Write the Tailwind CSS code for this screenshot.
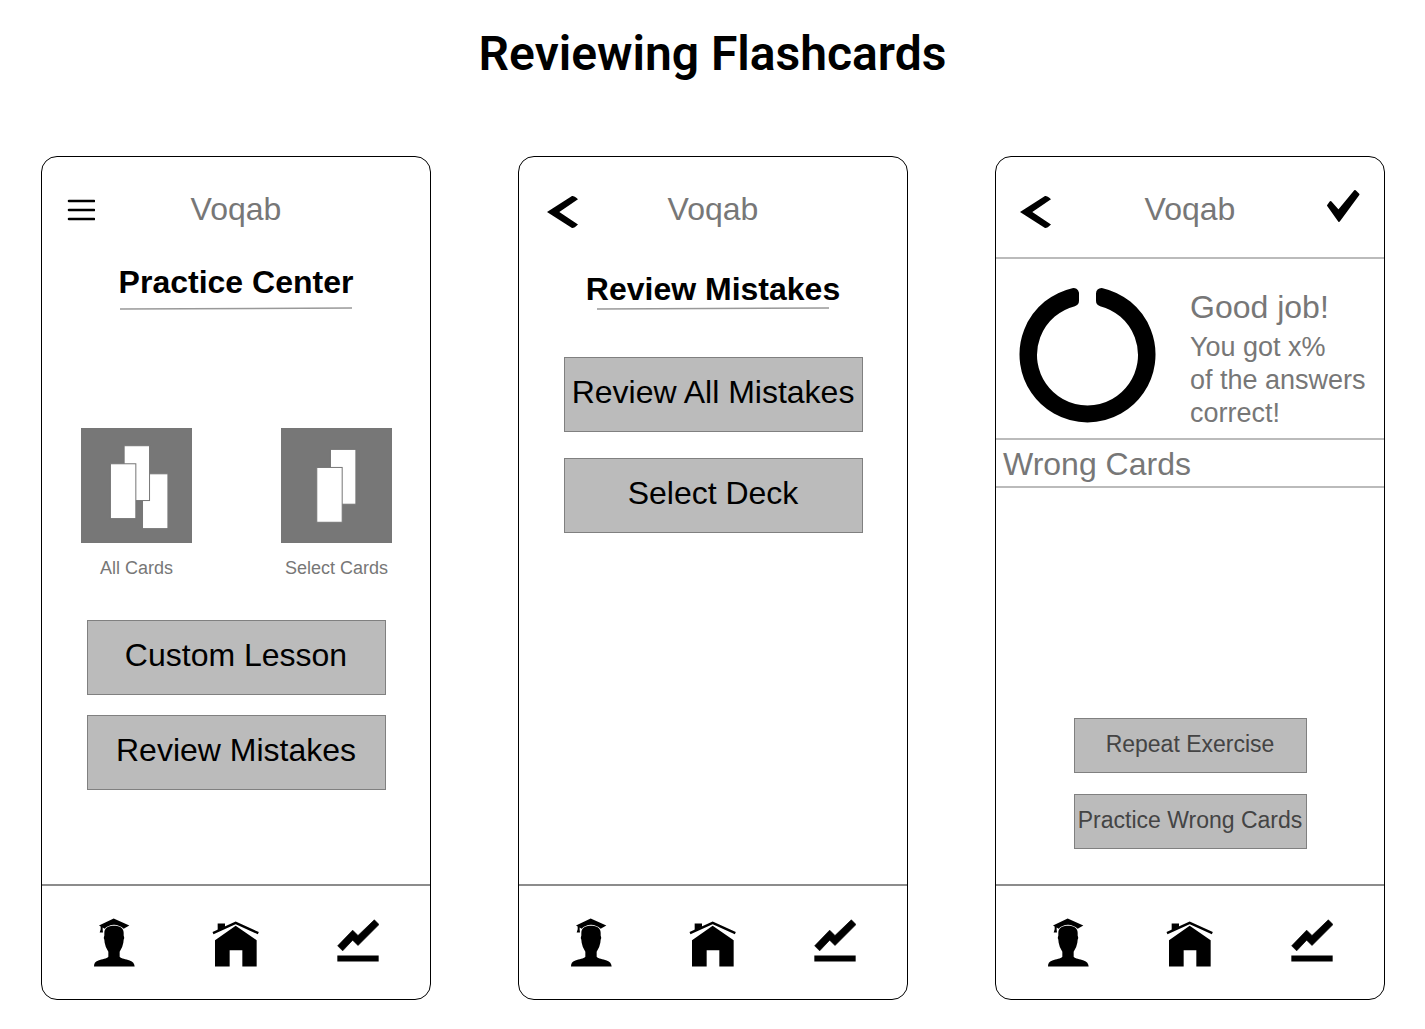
<!DOCTYPE html>
<html lang="en">
<head>
<meta charset="utf-8">
<meta name="viewport" content="width=device-width, initial-scale=1">
<title>Reviewing Flashcards</title>
<script src="https://cdn.jsdelivr.net/npm/@tailwindcss/browser@4"></script>
</head>
<body class="bg-white text-black font-['Liberation_Sans',Arial,sans-serif]">

<!-- Shared icon shapes -->
<svg class="hidden" aria-hidden="true">
  <symbol id="back" viewBox="0 0 32 34">
    <path d="M0 17 25 1Q27 .6 31 4.200L12.300 17 31 29.500Q27 33.400 25 33Z"/>
  </symbol>
  <symbol id="student" viewBox="42 54 126 146">
    <path d="M101 55 148 76 131 86Q119 75 102 74 84 75 74 86L68 82V88L69 97H59L62 87V79L57 76Z"/>
    <path d="M102 77C120 77 131 84 131 98V106Q134 112 131 119L130 128Q128 142 119 155V170C124 176 137 177 149 181 159 185 163 190 164 199H42C42 190 45 185 55 181 67 177 80 176 85 170V155Q76 142 74 128L73 119Q70 112 73 106V98C73 84 84 77 102 77Z"/>
  </symbol>
  <symbol id="home" viewBox="397 54 141 146">
    <path d="M400 99 468 68 536 99" fill="none" stroke="currentColor" stroke-width="7"/>
    <path d="M414 70H436V80L414 91Z"/>
    <path d="M468 77 531 120V199H488V150H450V199H406V120Z"/>
  </symbol>
  <symbol id="stats" viewBox="768 54 129 146">
    <path d="M883 59 897 73 834 136 818 120 788 152 773 137 818 90 834 106Z" stroke="currentColor" stroke-width="2"/>
    <path d="M772 166H896V184H772Z"/>
  </symbol>
</svg>

<h1 class="pt-6 text-center text-5xl leading-[60px] font-semibold font-['Roboto',sans-serif]">Reviewing Flashcards</h1>

<main class="grid grid-cols-3 gap-[87px] pt-[72px] pr-10 pb-7 pl-[41px]">

  <!-- Practice center -->
  <section class="flex min-h-[844px] flex-col overflow-hidden rounded-2xl border border-black">
    <header class="grid h-[101px] grid-cols-3 items-center px-[25px] pb-1 pt-1.5">
      <button class="justify-self-start pt-0.5" aria-label="Menu">
        <svg class="h-6 w-7" viewBox="0 0 28 24" fill="none" stroke="currentColor" stroke-width="2.600" stroke-linecap="round"><path d="M2 3H27M2 12H27M2 21H27"/></svg>
      </button>
      <p class="text-center text-[32px] leading-10 text-[#777]">Voqab</p>
    </header>
    <div class="flex flex-col items-center pt-1">
      <h2 class="text-[32px] leading-10 font-bold whitespace-nowrap">Practice Center</h2>
      <svg class="mt-1 h-1 w-[232px]" viewBox="0 0 232 4" stroke="#999" stroke-width="1.500"><path d="M0 3 232 2"/></svg>
    </div>
    <div class="mt-[118px] flex justify-between px-[39px] pr-[38px]">
      <button class="flex w-[111px] flex-col items-center">
        <svg class="h-[115px] w-[111px]" viewBox="33 24 332 344" fill="#fff" stroke="#777" stroke-width="3">
          <rect x="33" y="24" width="332" height="344" fill="#777"/>
          <rect x="217" y="161" width="76" height="164"/><rect x="162" y="77" width="76" height="164"/><rect x="121" y="131" width="76" height="164"/>
        </svg>
        <span class="mt-[13px] text-lg leading-6 whitespace-nowrap text-[#777]">All Cards</span>
      </button>
      <button class="flex w-[111px] flex-col items-center">
        <svg class="h-[115px] w-[111px]" viewBox="634 24 332 344" fill="#fff" stroke="#777" stroke-width="3">
          <rect x="634" y="24" width="332" height="344" fill="#777"/>
          <rect x="782" y="88" width="76" height="164"/><rect x="741" y="142" width="76" height="164"/>
        </svg>
        <span class="mt-[13px] text-lg leading-6 whitespace-nowrap text-[#777]">Select Cards</span>
      </button>
    </div>
    <div class="mt-10 mb-10 flex flex-col items-center gap-5">
      <button class="h-[75px] w-[299px] border border-[#808080] bg-[#bbb] pb-1.5 text-[32px] whitespace-nowrap">Custom Lesson</button>
      <button class="h-[75px] w-[299px] border border-[#808080] bg-[#bbb] pb-1.5 text-[32px] whitespace-nowrap">Review Mistakes</button>
    </div>
    <nav class="mt-auto grid h-[115px] grid-cols-3 place-items-center border-t-2 border-[#8c8c8c] px-3">
      <a href="#" aria-label="Profile"><svg class="h-[49px] w-[42px]" fill="currentColor"><use href="#student"/></svg></a>
      <a href="#" aria-label="Home"><svg class="h-[49px] w-[47px]" fill="currentColor"><use href="#home"/></svg></a>
      <a href="#" aria-label="Statistics"><svg class="h-[49px] w-[43px]" fill="currentColor"><use href="#stats"/></svg></a>
    </nav>
  </section>

  <!-- Review mistakes -->
  <section class="flex min-h-[844px] flex-col overflow-hidden rounded-2xl border border-black">
    <header class="grid h-[101px] grid-cols-3 items-center px-7 pb-1 pt-1.5">
      <button class="justify-self-start pt-1.5" aria-label="Back"><svg class="h-[34px] w-8" fill="currentColor"><use href="#back"/></svg></button>
      <p class="text-center text-[32px] leading-10 text-[#777]">Voqab</p>
    </header>
    <div class="flex flex-col items-center pt-3">
      <h2 class="text-[32px] leading-[38px] font-bold whitespace-nowrap">Review Mistakes</h2>
      <svg class="-mt-0.5 h-1 w-[232px]" viewBox="0 0 232 4" stroke="#999" stroke-width="1.500"><path d="M0 3 232 2"/></svg>
    </div>
    <div class="mt-[47px] mb-10 flex flex-col items-center gap-[26px]">
      <button class="h-[75px] w-[299px] border border-[#808080] bg-[#bbb] pb-1.5 text-[32px] whitespace-nowrap">Review All Mistakes</button>
      <button class="h-[75px] w-[299px] border border-[#808080] bg-[#bbb] pb-1.5 text-[32px] whitespace-nowrap">Select Deck</button>
    </div>
    <nav class="mt-auto grid h-[115px] grid-cols-3 place-items-center border-t-2 border-[#8c8c8c] px-3">
      <a href="#" aria-label="Profile"><svg class="h-[49px] w-[42px]" fill="currentColor"><use href="#student"/></svg></a>
      <a href="#" aria-label="Home"><svg class="h-[49px] w-[47px]" fill="currentColor"><use href="#home"/></svg></a>
      <a href="#" aria-label="Statistics"><svg class="h-[49px] w-[43px]" fill="currentColor"><use href="#stats"/></svg></a>
    </nav>
  </section>

  <!-- Result -->
  <section class="flex min-h-[844px] flex-col overflow-hidden rounded-2xl border border-black">
    <header class="grid h-[102px] grid-cols-3 items-center border-b-2 border-[#bbb] px-6 pb-1 pt-2">
      <button class="justify-self-start pt-1.5" aria-label="Back"><svg class="h-[34px] w-8" fill="currentColor"><use href="#back"/></svg></button>
      <p class="text-center text-[32px] leading-10 text-[#777]">Voqab</p>
      <button class="justify-self-end pb-1.5" aria-label="Done">
        <svg class="h-[34px] w-[34px]" viewBox="0 0 34 34" fill="currentColor" stroke="currentColor" stroke-width="2" stroke-linejoin="round"><path d="M29 2 32.500 5.500 13 32 2 16.500 4.500 13 12.500 22Z"/></svg>
      </button>
    </header>
    <div class="flex items-start border-b-2 border-[#bbb] pt-7 pb-2 pl-[23px]">
      <svg class="h-[138px] w-[138px] shrink-0" viewBox="-69 -68 138 138" stroke="currentColor" stroke-width="11" stroke-linejoin="round" role="img" aria-label="Score">
        <path d="M14-61.500A62.500 62.500 0 1 1-14-61.500V-54.200A56 56 0 1 0 14-54.200Z" transform="translate(-.5 0)"/>
      </svg>
      <div class="ml-[33px] text-[#777]">
        <p class="text-[32px] leading-10 whitespace-nowrap">Good job!</p>
        <p class="mt-1 text-[27px] leading-[33px] whitespace-nowrap">You got x%<br>of the answers<br>correct!</p>
      </div>
    </div>
    <h2 class="border-b-2 border-[#bbb] pl-[7px] pt-0.5 text-[32px] leading-[44px] text-[#777]">Wrong Cards</h2>
    <div class="mt-auto flex flex-col items-center gap-[21px] pt-10 pb-[35px]">
      <button class="h-[55px] w-[233px] border border-[#808080] bg-[#bbb] px-0 pb-0.5 text-[23px] whitespace-nowrap text-[#444]">Repeat Exercise</button>
      <button class="h-[55px] w-[233px] border border-[#808080] bg-[#bbb] px-0 pb-0.5 text-[23px] whitespace-nowrap text-[#444]">Practice Wrong Cards</button>
    </div>
    <nav class="grid h-[115px] grid-cols-3 place-items-center border-t-2 border-[#8c8c8c] px-3">
      <a href="#" aria-label="Profile"><svg class="h-[49px] w-[42px]" fill="currentColor"><use href="#student"/></svg></a>
      <a href="#" aria-label="Home"><svg class="h-[49px] w-[47px]" fill="currentColor"><use href="#home"/></svg></a>
      <a href="#" aria-label="Statistics"><svg class="h-[49px] w-[43px]" fill="currentColor"><use href="#stats"/></svg></a>
    </nav>
  </section>
</main>
</body>
</html>
